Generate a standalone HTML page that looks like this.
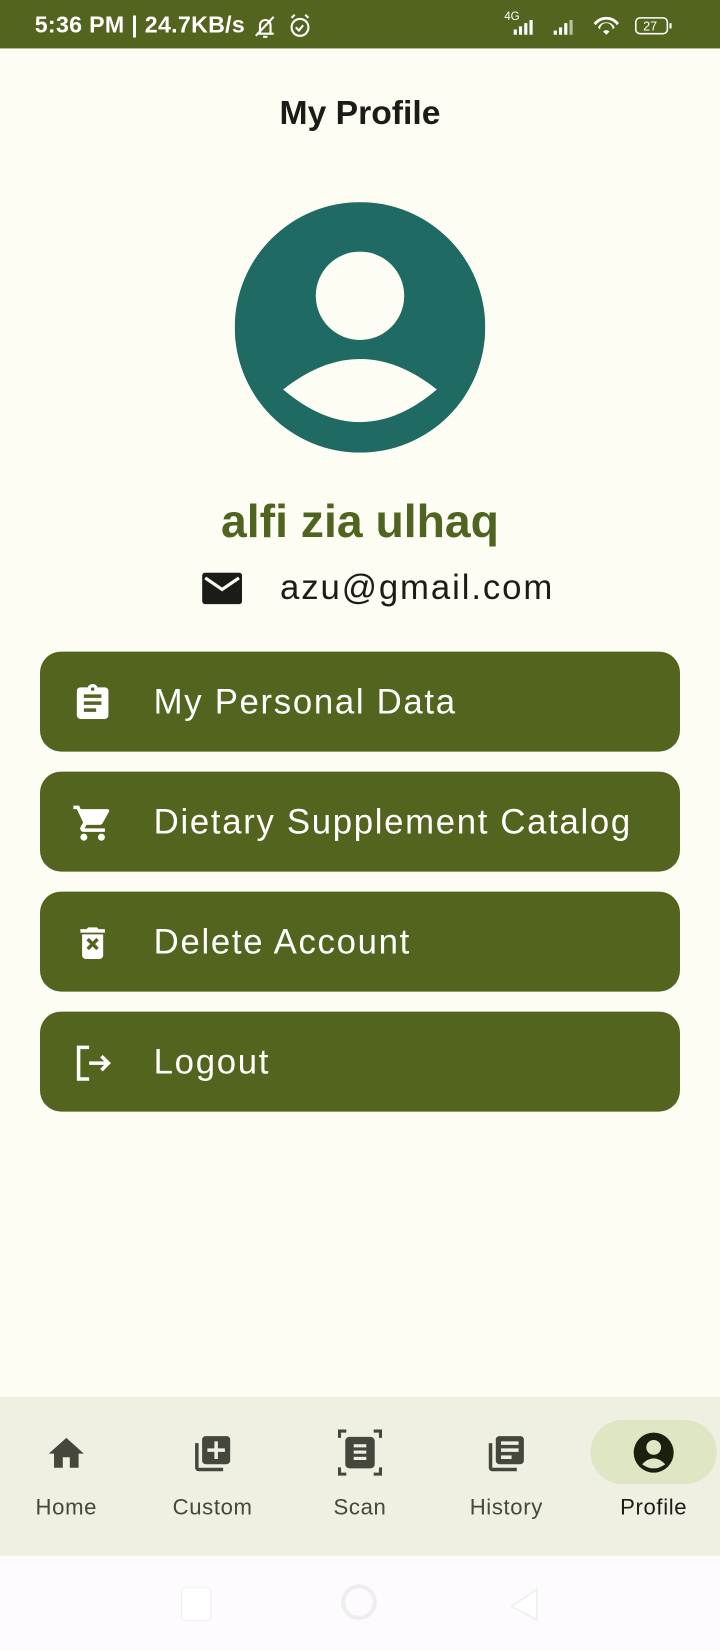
<!DOCTYPE html>
<html><head><meta charset="utf-8"><style>
html,body{margin:0;padding:0;width:720px;height:1650px;overflow:hidden;background:#fdfdf3}
#w{position:absolute;left:0;top:0;width:684px;height:1568px;transform:scale(1.05263);transform-origin:0 0;font-family:"Liberation Sans",sans-serif;background:#fdfdf3}
.a{position:absolute}
.sb{left:0;top:0;width:684px;height:46px;background:#52641e;color:#fff}
.btn{left:38px;width:608px;height:95px;background:#52641e;border-radius:20px;color:#fff;font-size:33px;letter-spacing:1.6px}
.btn span{position:absolute;left:108px;top:29px}
.btn svg{position:absolute;left:68px;top:29px}
.nav{left:0;top:1327px;width:684px;height:151px;background:#eff0e1}
.lbl{top:1421px;width:120px;text-align:center;font-size:21px;color:#44473b;letter-spacing:.6px}
</style></head><body><div id="w">
<div class="a sb">
<div class="a" style="left:33px;top:11px;font-size:22px;font-weight:bold;letter-spacing:.3px">5:36 PM | 24.7KB/s</div>
<svg class="a" style="left:240px;top:12px" width="60" height="26" viewBox="0 0 60 26" fill="none" stroke="#fff" stroke-width="2"><path d="M4 20h16M7 20v-8a5 5 0 0 1 10 0v8M3 22L20 4M10 23h4"/><circle cx="45" cy="14" r="8"/><path d="M41 14l3 3 4-5M37 5l3-3M53 5l-3-3"/></svg>
<div class="a" style="left:479px;top:10px;font-size:11px">4G</div>
<svg class="a" style="left:480px;top:14px" width="180" height="22" viewBox="0 0 180 22" fill="#fff"><rect x="8" y="14" width="3" height="5"/><rect x="13" y="11" width="3" height="8"/><rect x="18" y="8" width="3" height="11"/><rect x="23" y="5" width="3" height="14"/><rect x="46" y="15" width="3" height="4"/><rect x="51" y="12" width="3" height="7"/><rect x="56" y="8" width="3" height="11"/><rect x="61" y="5" width="3" height="14" opacity=".6"/><path d="M84 8a15 15 0 0 1 24 0l-2 2a12 12 0 0 0-20 0zM88 12a9 9 0 0 1 16 0l-2 2a6 6 0 0 0-12 0zM96 19l-3-3a4 4 0 0 1 6 0z"/><rect x="124" y="3" width="30" height="15" rx="4" fill="none" stroke="#fff" stroke-width="1.5"/><rect x="156" y="8" width="2" height="5"/><text x="131" y="15" font-size="12" font-family="Liberation Sans">27</text></svg>
</div>
<div class="a" style="left:0;top:89px;width:684px;text-align:center;font-size:32px;font-weight:bold;color:#1b1c17;padding-left:0">My Profile</div>
<svg class="a" style="left:223px;top:192px" width="238" height="238" viewBox="0 0 238 238"><circle cx="119" cy="119" r="119" fill="#1f6a62"/><circle cx="119" cy="89" r="42" fill="#fdfdf3"/><path d="M46 178q73-58 146 0q-73 62-146 0z" fill="#fdfdf3"/></svg>
<div class="a" style="left:0;top:471px;width:684px;text-align:center;font-size:44px;font-weight:bold;color:#4f6420">alfi zia ulhaq</div>
<svg class="a" style="left:192px;top:544px" width="38" height="30" viewBox="0 0 38 30"><rect width="38" height="30" rx="3" fill="#1b1c17"/><path d="M3 5l16 11 16-11" stroke="#fdfdf3" stroke-width="3" fill="none"/></svg>
<div class="a" style="left:266px;top:539px;font-size:33px;color:#1b1c17;letter-spacing:1.8px">azu@gmail.com</div>
<div class="a btn" style="top:619px"><svg width="40" height="40" viewBox="0 0 24 24" fill="#fff" style="left:30px"><path d="M19 3h-4.2a3 3 0 0 0-5.6 0H5a2 2 0 0 0-2 2v14a2 2 0 0 0 2 2h14a2 2 0 0 0 2-2V5a2 2 0 0 0-2-2zm-7 0a1 1 0 1 1 0 2 1 1 0 0 1 0-2zm2 14H7v-2h7zm3-4H7v-2h10zm0-4H7V7h10z"/></svg><span>My Personal Data</span></div>
<div class="a btn" style="top:733px"><svg width="40" height="40" viewBox="0 0 24 24" fill="#fff" style="left:30px"><path d="M7 18a2 2 0 1 0 0 4 2 2 0 0 0 0-4zM1 2v2h2l3.6 7.6-1.4 2.4A2 2 0 0 0 7 17h12v-2H7.4l1.1-2h7.5a2 2 0 0 0 1.7-1l3.6-6.5A1 1 0 0 0 20.4 4H5.2l-.9-2zm16 16a2 2 0 1 0 0 4 2 2 0 0 0 0-4z"/></svg><span>Dietary Supplement Catalog</span></div>
<div class="a btn" style="top:847px"><svg width="40" height="40" viewBox="0 0 24 24" fill="#fff" style="left:30px"><path d="M15.5 4l-1-1h-5l-1 1H5v2h14V4zM6 19a2 2 0 0 0 2 2h8a2 2 0 0 0 2-2V7H6zm2.5-8.6l1.4-1.4L12 11.1 14.1 9l1.4 1.4-2.1 2.1 2.1 2.1-1.4 1.4-2.1-2.1-2.1 2.1-1.4-1.4 2.1-2.1z"/></svg><span>Delete Account</span></div>
<div class="a btn" style="top:961px"><svg width="40" height="40" viewBox="0 0 24 24" fill="none" stroke="#fff" stroke-width="2" style="left:30px"><path d="M10 3H4v18h6M10 12h11M17 8l4 4-4 4"/></svg><span>Logout</span></div>
<div class="a nav"></div>
<div class="a" style="left:561px;top:1349px;width:120px;height:61px;border-radius:31px;background:#dee6c4"></div>
<svg class="a" style="left:43px;top:1361px" width="40" height="40" viewBox="0 0 24 24" fill="#44473b"><path d="M10 20v-6h4v6h5v-8h3L12 3 2 12h3v8z"/></svg>
<svg class="a" style="left:182px;top:1361px" width="40" height="40" viewBox="0 0 24 24" fill="#44473b"><path d="M4 6H2v14a2 2 0 0 0 2 2h14v-2H4zm16-4H8a2 2 0 0 0-2 2v12a2 2 0 0 0 2 2h12a2 2 0 0 0 2-2V4a2 2 0 0 0-2-2zm-1 9h-4v4h-2v-4H9V9h4V5h2v4h4z"/></svg>
<svg class="a" style="left:321px;top:1358px" width="42" height="44" viewBox="0 0 42 44" fill="#44473b"><path d="M0 0h8v3H3v5H0zM42 0h-8v3h5v5h3zM0 44h8v-3H3v-5H0zM42 44h-8v-3h5v-5h3z"/><rect x="7" y="7" width="28" height="30" rx="4"/><rect x="15" y="14" width="12" height="3" fill="#eff0e1"/><rect x="15" y="20" width="12" height="3" fill="#eff0e1"/><rect x="15" y="26" width="12" height="3" fill="#eff0e1"/></svg>
<svg class="a" style="left:461px;top:1361px" width="40" height="40" viewBox="0 0 24 24" fill="#44473b"><path d="M4 6H2v14a2 2 0 0 0 2 2h14v-2H4zm16-4H8a2 2 0 0 0-2 2v12a2 2 0 0 0 2 2h12a2 2 0 0 0 2-2V4a2 2 0 0 0-2-2zm-1 9H9V9h10zm-4 4H9v-2h6zm4-8H9V5h10z"/></svg>
<svg class="a" style="left:601px;top:1360px" width="40" height="40" viewBox="0 0 40 40"><circle cx="20" cy="20" r="19" fill="#1b1f0e"/><circle cx="20" cy="15" r="7" fill="#dee6c4"/><path d="M9 31q11-11 22 0q-11 8-22 0z" fill="#dee6c4"/></svg>
<div class="a lbl" style="left:3px">Home</div>
<div class="a lbl" style="left:142px">Custom</div>
<div class="a lbl" style="left:282px">Scan</div>
<div class="a lbl" style="left:421px">History</div>
<div class="a lbl" style="left:561px;color:#1b1c17">Profile</div>
<div class="a" style="left:0;top:1478px;width:684px;height:90px;background:#fefbfe"></div>
<div class="a" style="left:172px;top:1508px;width:27px;height:30px;border:1.5px solid #eee;border-radius:4px;background:#fff"></div>
<div class="a" style="left:324px;top:1505px;width:34px;height:34px;border:4px solid #eee;border-radius:50%;box-sizing:border-box"></div>
<svg class="a" style="left:482px;top:1508px" width="30" height="32"><path d="M28 2L4 18l24 13z" fill="#fff" stroke="#eee" stroke-width="1.5"/></svg>
</div></body></html>
